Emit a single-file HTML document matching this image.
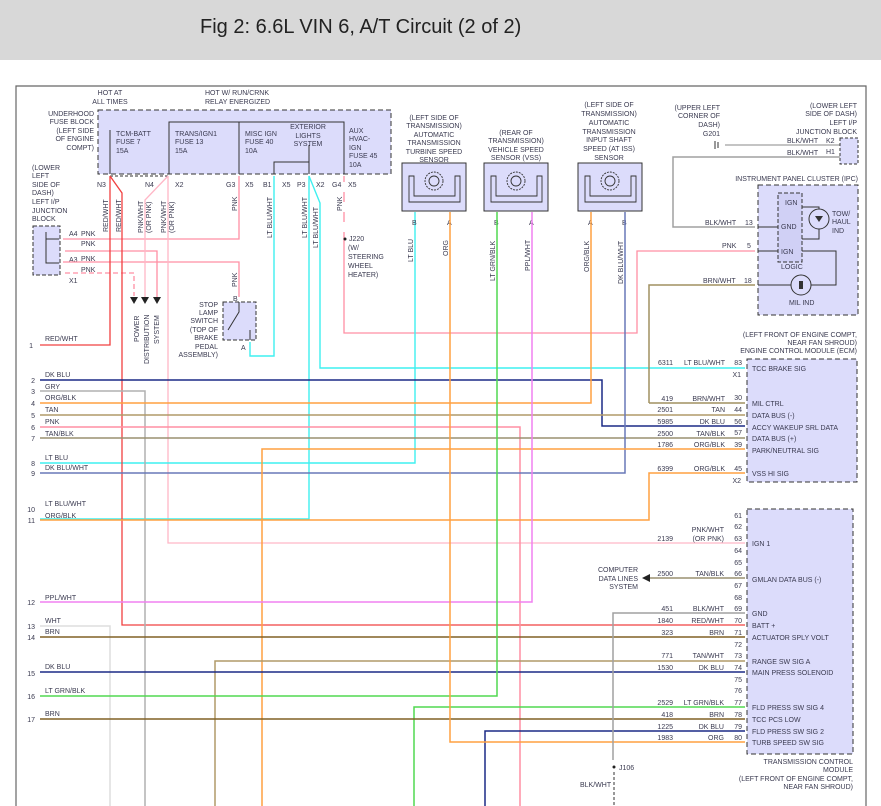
<!DOCTYPE html>
<html><head><meta charset="utf-8"><style>
html,body{margin:0;padding:0;background:#fff;width:881px;height:806px;overflow:hidden}
svg{display:block}
text{font-family:"Liberation Sans",sans-serif;font-size:7px;fill:#3a3a50}
.t{font-size:20px;fill:#222}
.e{text-anchor:end}.m{text-anchor:middle}
polyline,line,path{fill:none}
</style></head><body>
<svg width="881" height="806" viewBox="0 0 881 806" xmlns="http://www.w3.org/2000/svg">
<rect x="0" y="0" width="881" height="60" fill="#d8d8d8"/>
<text x="200" y="33" class="t">Fig 2: 6.6L VIN 6, A/T Circuit (2 of 2)</text>
<polyline points="16,806 16,86 866,86 866,806" stroke="#666" stroke-width="1.2"/>

<!-- fuse block -->
<rect x="98" y="110" width="293" height="64" fill="#dcdcfb" stroke="#333" stroke-dasharray="5,3"/>
<polyline points="169,174 169,122 344,122 344,174" stroke="#333"/>
<line x1="239" y1="122" x2="239" y2="174" stroke="#333"/>
<line x1="110" y1="130" x2="110" y2="174" stroke="#333"/>
<polyline points="274,174 274,162 309,162" stroke="#333"/><line x1="309" y1="145" x2="309" y2="174" stroke="#333"/>
<text x="110" y="95" class="m">HOT AT</text><text x="110" y="104" class="m">ALL TIMES</text>
<text x="205" y="95">HOT W/ RUN/CRNK</text><text x="205" y="104">RELAY ENERGIZED</text>
<text x="94" y="116" class="e">UNDERHOOD</text><text x="94" y="124" class="e">FUSE BLOCK</text><text x="94" y="133" class="e">(LEFT SIDE</text><text x="94" y="141" class="e">OF ENGINE</text><text x="94" y="150" class="e">COMPT)</text>
<text x="116" y="136">TCM-BATT</text><text x="116" y="144">FUSE 7</text><text x="116" y="153">15A</text>
<text x="175" y="136">TRANS/IGN1</text><text x="175" y="144">FUSE 13</text><text x="175" y="153">15A</text>
<text x="245" y="136">MISC IGN</text><text x="245" y="144">FUSE 40</text><text x="245" y="153">10A</text>
<text x="308" y="129" class="m">EXTERIOR</text><text x="308" y="138" class="m">LIGHTS</text><text x="308" y="146" class="m">SYSTEM</text>
<text x="349" y="133">AUX</text><text x="349" y="141">HVAC-</text><text x="349" y="150">IGN</text><text x="349" y="158">FUSE 45</text><text x="349" y="167">10A</text>
<g font-size="7"><text x="97" y="187">N3</text><text x="145" y="187">N4</text><text x="175" y="187">X2</text><text x="226" y="187">G3</text><text x="245" y="187">X5</text><text x="263" y="187">B1</text><text x="282" y="187">X5</text><text x="297" y="187">P3</text><text x="316" y="187">X2</text><text x="332" y="187">G4</text><text x="348" y="187">X5</text></g>
<polyline points="110,176 168,176" stroke="#333" stroke-dasharray="3,2"/>

<!-- left junction block -->
<rect x="33" y="226" width="27" height="49" fill="#dcdcfb" stroke="#333" stroke-dasharray="4,2"/>
<polyline points="46,232 46,263 59,263" stroke="#333"/><line x1="46" y1="239" x2="59" y2="239" stroke="#333"/>
<text x="32" y="170">(LOWER</text><text x="32" y="178">LEFT</text><text x="32" y="187">SIDE OF</text><text x="32" y="195">DASH)</text><text x="32" y="204">LEFT I/P</text><text x="32" y="213">JUNCTION</text><text x="32" y="221">BLOCK</text>
<text x="69" y="236">A4</text><text x="81" y="246">PNK</text><text x="81" y="236">PNK</text><text x="69" y="262">A3</text><text x="81" y="261">PNK</text><text x="81" y="272">PNK</text><text x="69" y="283">X1</text>

<!-- pink wires -->
<g stroke="#ff8fa3" stroke-width="1.3">
<polyline points="63,239 239,239 239,176"/>
<polyline points="65,251 157,251 157,300"/>
<polyline points="63,262 239,262 239,297"/>
<polyline points="65,273 134,273 134,296" stroke-dasharray="5,3"/>
<polyline points="344,176 344,333 637,333 637,251 755,251" />
</g>
<line x1="344" y1="176" x2="344" y2="232" stroke="#fff" stroke-width="2" stroke-dasharray="0,6,4"/>
<g stroke="#ffb6c6" stroke-width="1.3"><polyline points="168,176 168,543 745,543"/><polyline points="168,176 145,200 145,300"/></g>
<polygon points="130,297 138,297 134,304" fill="#222"/><polygon points="141,297 149,297 145,304" fill="#222"/><polygon points="153,297 161,297 157,304" fill="#222"/>
<text transform="translate(139,342) rotate(-90)">POWER</text>
<text transform="translate(149,364) rotate(-90)">DISTRIBUTION</text>
<text transform="translate(159,344) rotate(-90)">SYSTEM</text>
<text transform="translate(108,232) rotate(-90)">RED/WHT</text><text transform="translate(121,232) rotate(-90)">RED/WHT</text>
<text transform="translate(143,233) rotate(-90)">PNK/WHT</text><text transform="translate(151,233) rotate(-90)">(OR PNK)</text>
<text transform="translate(166,233) rotate(-90)">PNK/WHT</text><text transform="translate(174,233) rotate(-90)">(OR PNK)</text>
<text transform="translate(237,211) rotate(-90)">PNK</text><text transform="translate(272,238) rotate(-90)">LT BLU/WHT</text>
<text transform="translate(307,238) rotate(-90)">LT BLU/WHT</text><text transform="translate(318,248) rotate(-90)">LT BLU/WHT</text>
<text transform="translate(342,211) rotate(-90)">PNK</text><text transform="translate(237,287) rotate(-90)">PNK</text>
<circle cx="345" cy="239" r="1.5" fill="#222"/><text x="349" y="241">J220</text><text x="348" y="250">(W/</text><text x="348" y="259">STEERING</text><text x="348" y="268">WHEEL</text><text x="348" y="277">HEATER)</text>

<!-- stop lamp -->
<rect x="223" y="302" width="33" height="38" fill="#dcdcfb" stroke="#333" stroke-dasharray="4,2"/>
<polyline points="239,302 239,312 228,330" stroke="#333"/><polyline points="250,330 250,340" stroke="#333"/>
<text x="233" y="301">B</text><text x="241" y="350">A</text>
<text x="218" y="307" class="e">STOP</text><text x="218" y="315" class="e">LAMP</text><text x="218" y="323" class="e">SWITCH</text><text x="218" y="332" class="e">(TOP OF</text><text x="218" y="340" class="e">BRAKE</text><text x="218" y="349" class="e">PEDAL</text><text x="218" y="357" class="e">ASSEMBLY)</text>

<!-- cyan -->
<g stroke="#3ff0f0" stroke-width="1.4">
<polyline points="250,342 250,356 274,356 274,176"/>
<polyline points="309,176 309,519 40,519"/>
<polyline points="309,176 320,203 320,368 745,368"/>
<polyline points="415,212 415,463 40,463"/>
</g>
<!-- red -->
<g stroke="#f04040" stroke-width="1.3">
<polyline points="110,176 110,345 40,345"/>
<polyline points="110,176 122,193 122,625 745,625"/>
</g>
<text x="45" y="341">RED/WHT</text><text x="33" y="348" class="e">1</text>

<!-- sensors -->
<g stroke="#333" fill="#dcdcfb">
<rect x="402" y="163" width="64" height="48"/><rect x="484" y="163" width="64" height="48"/><rect x="578" y="163" width="64" height="48"/>
</g>
<g stroke="#333" stroke-width="0.9" fill="none">
<path d="M409,176 V202 H460 V176 H455 V196 H414 V176 Z"/><circle cx="434" cy="181" r="9" fill="#dcdcfb" stroke-dasharray="2,1"/><circle cx="434" cy="181" r="5"/>
<path d="M491,176 V202 H542 V176 H537 V196 H496 V176 Z"/><circle cx="516" cy="181" r="9" fill="#dcdcfb" stroke-dasharray="2,1"/><circle cx="516" cy="181" r="5"/>
<path d="M585,176 V202 H636 V176 H631 V196 H590 V176 Z"/><circle cx="610" cy="181" r="9" fill="#dcdcfb" stroke-dasharray="2,1"/><circle cx="610" cy="181" r="5"/>
</g>
<g class="m"><text x="434" y="120">(LEFT SIDE OF</text><text x="434" y="128">TRANSMISSION)</text><text x="434" y="137">AUTOMATIC</text><text x="434" y="145">TRANSMISSION</text><text x="434" y="154">TURBINE SPEED</text><text x="434" y="162">SENSOR</text>
<text x="516" y="135">(REAR OF</text><text x="516" y="143">TRANSMISSION)</text><text x="516" y="152">VEHICLE SPEED</text><text x="516" y="160">SENSOR (VSS)</text>
<text x="609" y="107">(LEFT SIDE OF</text><text x="609" y="116">TRANSMISSION)</text><text x="609" y="125">AUTOMATIC</text><text x="609" y="134">TRANSMISSION</text><text x="609" y="142">INPUT SHAFT</text><text x="609" y="151">SPEED (AT ISS)</text><text x="609" y="160">SENSOR</text></g>
<text x="412" y="225">B</text><text x="447" y="225">A</text><text x="494" y="225">B</text><text x="529" y="225">A</text><text x="588" y="225">A</text><text x="622" y="225">B</text>
<text transform="translate(413,262) rotate(-90)">LT BLU</text><text transform="translate(448,256) rotate(-90)">ORG</text>
<text transform="translate(495,281) rotate(-90)">LT GRN/BLK</text><text transform="translate(530,271) rotate(-90)">PPL/WHT</text>
<text transform="translate(589,272) rotate(-90)">ORG/BLK</text><text transform="translate(623,284) rotate(-90)">DK BLU/WHT</text>

<!-- left rows -->
<g stroke-width="1.5">
<polyline points="40,380 602,380 602,426 745,426" stroke="#1b2a85"/>
<polyline points="40,391 145,391 145,806" stroke="#b0b0b0"/>
<polyline points="40,403 591,403 591,212" stroke="#ffa040"/>
<polyline points="40,415 745,415" stroke="#b09a68"/>
<polyline points="40,427 520,427 520,806" stroke="#ff8fa3"/>
<polyline points="40,438 745,438" stroke="#9a9070"/>
<polyline points="40,473 625,473 625,212" stroke="#6878b8"/>
<polyline points="40,520 649,520 649,473 745,473" stroke="#ffa040"/>
<polyline points="262,806 262,449 745,449" stroke="#ffa040"/>
<polyline points="40,602 532,602 532,212" stroke="#f080f0"/>
<polyline points="40,626 110,626 110,806" stroke="#dedede"/>
<polyline points="40,637 745,637" stroke="#806025"/>
<polyline points="215,806 215,661 745,661" stroke="#b09a68"/>
<polyline points="40,672 745,672" stroke="#1b2a85"/>
<polyline points="40,696 497,696 497,212" stroke="#50d850"/>
<polyline points="414,806 414,707 745,707" stroke="#50d850"/>
<polyline points="40,719 745,719" stroke="#806025"/>
<polyline points="485,806 485,731 745,731" stroke="#1b2a85"/>
<polyline points="450,212 450,742 745,742" stroke="#ffa040"/>
<polyline points="649,403 649,285 755,285" stroke="#a09060"/>
<polyline points="649,403 745,403" stroke="#a09060"/>
<polyline points="650,578 745,578" stroke="#9a9070"/>
<polyline points="613,760 613,613 745,613" stroke="#a0a0a0"/>
<polyline points="725,145 840,145" stroke="#b0b0b0"/>
<polyline points="840,157 673,157 673,227 755,227" stroke="#a0a0a0"/>
</g>
<polygon points="642,578 650,574 650,582" fill="#222"/>
<g><text x="45" y="377">DK BLU</text><text x="45" y="389">GRY</text><text x="45" y="400">ORG/BLK</text><text x="45" y="412">TAN</text><text x="45" y="424">PNK</text><text x="45" y="436">TAN/BLK</text><text x="45" y="460">LT BLU</text><text x="45" y="470">DK BLU/WHT</text><text x="45" y="506">LT BLU/WHT</text><text x="45" y="518">ORG/BLK</text><text x="45" y="600">PPL/WHT</text><text x="45" y="623">WHT</text><text x="45" y="634">BRN</text><text x="45" y="669">DK BLU</text><text x="45" y="693">LT GRN/BLK</text><text x="45" y="716">BRN</text></g>
<g class="e"><text x="35" y="383">2</text><text x="35" y="394">3</text><text x="35" y="406">4</text><text x="35" y="418">5</text><text x="35" y="430">6</text><text x="35" y="441">7</text><text x="35" y="466">8</text><text x="35" y="476">9</text><text x="35" y="512">10</text><text x="35" y="523">11</text><text x="35" y="605">12</text><text x="35" y="629">13</text><text x="35" y="640">14</text><text x="35" y="676">15</text><text x="35" y="699">16</text><text x="35" y="722">17</text></g>

<!-- IPC -->
<text x="857" y="108" class="e">(LOWER LEFT</text><text x="857" y="116" class="e">SIDE OF DASH)</text><text x="857" y="125" class="e">LEFT I/P</text><text x="857" y="134" class="e">JUNCTION BLOCK</text>
<rect x="840" y="138" width="18" height="26" fill="#dcdcfb" stroke="#333" stroke-dasharray="3,2"/>
<text x="787" y="143">BLK/WHT</text><text x="826" y="143">K2</text><text x="787" y="155">BLK/WHT</text><text x="826" y="154">H1</text>
<text x="720" y="110" class="e">(UPPER LEFT</text><text x="720" y="118" class="e">CORNER OF</text><text x="720" y="127" class="e">DASH)</text><text x="720" y="136" class="e">G201</text>
<line x1="715" y1="141" x2="715" y2="149" stroke="#333"/><line x1="718" y1="142" x2="718" y2="148" stroke="#333"/>
<text x="858" y="181" class="e">INSTRUMENT PANEL CLUSTER (IPC)</text>
<rect x="758" y="185" width="100" height="130" fill="#dcdcfb" stroke="#333" stroke-dasharray="5,3"/>
<rect x="778" y="193" width="24" height="69" fill="#d0d0f5" stroke="#333" stroke-dasharray="4,2"/>
<text x="785" y="205">IGN</text><text x="781" y="229">GND</text><text x="781" y="254">IGN</text><text x="781" y="269">LOGIC</text><text x="789" y="305">MIL IND</text>
<text x="832" y="216">TOW/</text><text x="832" y="224">HAUL</text><text x="832" y="233">IND</text>
<circle cx="819" cy="219" r="10" fill="#dcdcfb" stroke="#333"/><circle cx="801" cy="285" r="10" fill="#dcdcfb" stroke="#333"/>
<polygon points="815,216 823,216 819,222" fill="#333"/><rect x="799" y="281" width="4" height="8" fill="#333"/>
<polyline points="802,207 819,207 819,209" stroke="#333"/><polyline points="802,239 819,239 819,229" stroke="#333"/>
<polyline points="802,251 836,251 836,285 811,285" stroke="#333"/><line x1="758" y1="227" x2="778" y2="227" stroke="#333"/><line x1="758" y1="251" x2="778" y2="251" stroke="#333"/><line x1="758" y1="285" x2="791" y2="285" stroke="#333"/>
<text x="705" y="225">BLK/WHT</text><text x="745" y="225">13</text><text x="722" y="248">PNK</text><text x="747" y="248">5</text><text x="703" y="283">BRN/WHT</text><text x="744" y="283">18</text>

<!-- ECM -->
<text x="857" y="337" class="e">(LEFT FRONT OF ENGINE COMPT,</text><text x="857" y="345" class="e">NEAR FAN SHROUD)</text><text x="857" y="353" class="e">ENGINE CONTROL MODULE (ECM)</text>
<rect x="747" y="359" width="110" height="123" fill="#dcdcfb" stroke="#333" stroke-dasharray="5,3"/>
<g><text x="752" y="371">TCC BRAKE SIG</text><text x="752" y="406">MIL CTRL</text><text x="752" y="418">DATA BUS (-)</text><text x="752" y="430">ACCY WAKEUP SRL DATA</text><text x="752" y="441">DATA BUS (+)</text><text x="752" y="453">PARK/NEUTRAL SIG</text><text x="752" y="476">VSS HI SIG</text></g>
<g class="e"><text x="673" y="365">6311</text><text x="725" y="365">LT BLU/WHT</text><text x="742" y="365">83</text><text x="741" y="377">X1</text>
<text x="673" y="401">419</text><text x="725" y="401">BRN/WHT</text><text x="742" y="400">30</text>
<text x="673" y="412">2501</text><text x="725" y="412">TAN</text><text x="742" y="412">44</text>
<text x="673" y="424">5985</text><text x="725" y="424">DK BLU</text><text x="742" y="424">56</text>
<text x="673" y="436">2500</text><text x="725" y="436">TAN/BLK</text><text x="742" y="435">57</text>
<text x="673" y="447">1786</text><text x="725" y="447">ORG/BLK</text><text x="742" y="447">39</text>
<text x="673" y="471">6399</text><text x="725" y="471">ORG/BLK</text><text x="742" y="471">45</text><text x="741" y="483">X2</text></g>

<!-- TCM -->
<rect x="747" y="509" width="106" height="245" fill="#dcdcfb" stroke="#333" stroke-dasharray="5,3"/>
<g><text x="752" y="546">IGN 1</text><text x="752" y="582">GMLAN DATA BUS (-)</text><text x="752" y="616">GND</text><text x="752" y="628">BATT +</text><text x="752" y="640">ACTUATOR SPLY VOLT</text><text x="752" y="664">RANGE SW SIG A</text><text x="752" y="675">MAIN PRESS SOLENOID</text><text x="752" y="710">FLD PRESS SW SIG 4</text><text x="752" y="722">TCC PCS LOW</text><text x="752" y="734">FLD PRESS SW SIG 2</text><text x="752" y="745">TURB SPEED SW SIG</text></g>
<g class="e"><text x="742" y="518">61</text><text x="742" y="529">62</text><text x="742" y="541">63</text><text x="742" y="553">64</text><text x="742" y="565">65</text><text x="742" y="576">66</text><text x="742" y="588">67</text><text x="742" y="600">68</text><text x="742" y="611">69</text><text x="742" y="623">70</text><text x="742" y="635">71</text><text x="742" y="647">72</text><text x="742" y="658">73</text><text x="742" y="670">74</text><text x="742" y="682">75</text><text x="742" y="693">76</text><text x="742" y="705">77</text><text x="742" y="717">78</text><text x="742" y="729">79</text><text x="742" y="740">80</text>
<text x="724" y="532">PNK/WHT</text><text x="724" y="541">(OR PNK)</text><text x="673" y="541">2139</text>
<text x="673" y="576">2500</text><text x="724" y="576">TAN/BLK</text>
<text x="673" y="611">451</text><text x="724" y="611">BLK/WHT</text>
<text x="673" y="623">1840</text><text x="724" y="623">RED/WHT</text>
<text x="673" y="635">323</text><text x="724" y="635">BRN</text>
<text x="673" y="658">771</text><text x="724" y="658">TAN/WHT</text>
<text x="673" y="670">1530</text><text x="724" y="670">DK BLU</text>
<text x="673" y="705">2529</text><text x="724" y="705">LT GRN/BLK</text>
<text x="673" y="717">418</text><text x="724" y="717">BRN</text>
<text x="673" y="729">1225</text><text x="724" y="729">DK BLU</text>
<text x="673" y="740">1983</text><text x="724" y="740">ORG</text>
<text x="853" y="764">TRANSMISSION CONTROL</text><text x="853" y="772">MODULE</text><text x="853" y="781">(LEFT FRONT OF ENGINE COMPT,</text><text x="853" y="789">NEAR FAN SHROUD)</text></g>
<text x="638" y="572" class="e">COMPUTER</text><text x="638" y="581" class="e">DATA LINES</text><text x="638" y="589" class="e">SYSTEM</text>
<circle cx="614" cy="767" r="1.5" fill="#222"/><text x="619" y="770">J106</text>
<line x1="614" y1="772" x2="614" y2="806" stroke="#333" stroke-dasharray="3,2"/>
<text x="580" y="787">BLK/WHT</text>
</svg>
</body></html>
